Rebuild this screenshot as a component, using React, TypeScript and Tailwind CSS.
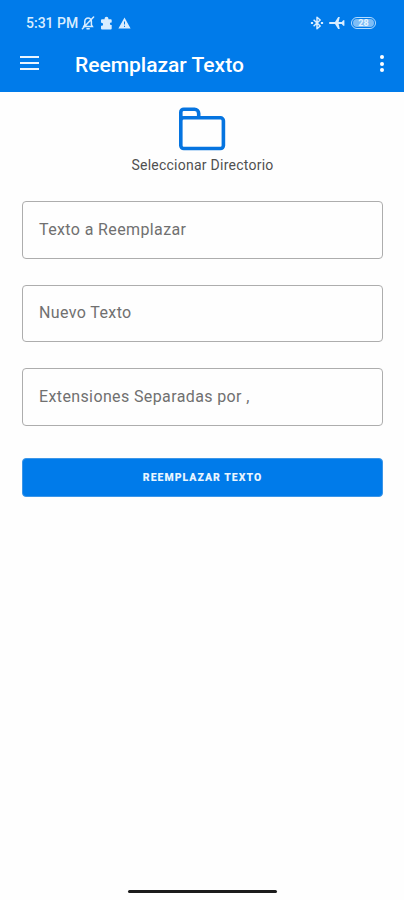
const fields = [
  { name: "buscar", label: "Texto a Reemplazar" },
  { name: "nuevo", label: "Nuevo Texto" },
  { name: "extensiones", label: "Extensiones Separadas por ," },
];

function MutedBellIcon() {
  return (
    <svg viewBox="0 0 14 14" className="w-3.5 h-3.5" fill="none" stroke="currentColor" strokeWidth="1.5" strokeLinecap="round">
      <path d="M2.6 10.6h8.8L10.4 8.8V5.4A3.3 3.3 0 0 0 7.1 2.1a3.3 3.3 0 0 0-3.3 3.3v3.2L2.6 10.6M6 12.7h2.2M12.6 1 1.4 12.8" />
    </svg>
  );
}

function PuzzleIcon() {
  return (
    <svg viewBox="0 0 13 14" className="w-[13px] h-3.5" fill="currentColor">
      <path d="M4.6 3.2V2.6a1.9 1.9 0 0 1 3.8 0v.6h2.3a1 1 0 0 1 1 1v2.2h-.5a1.3 1.3 0 0 0 0 2.6h.5v3.6a1 1 0 0 1-1 1H2a1 1 0 0 1-1-1V9.7h.6a1.5 1.5 0 0 0 0-3H1V4.2a1 1 0 0 1 1-1Z" />
    </svg>
  );
}

function WarningIcon() {
  return (
    <svg viewBox="0 0 13 12" className="w-[13px] h-3" fill="currentColor">
      <path fillRule="evenodd" d="M6.5.4 12.6 11.5H.4ZM6 4.4v3.2h1V4.4ZM6 8.7v1.2h1V8.7Z" />
    </svg>
  );
}

function BluetoothIcon() {
  return (
    <svg viewBox="0 0 14 14" className="w-3.5 h-3.5" fill="none" stroke="currentColor" strokeWidth="1.5" strokeLinejoin="round">
      <path d="M3.6 3.8 10.2 10 7 12.8V1.2L10.2 4 3.6 10.2" />
      <path d="M.9 7h2.2M10.9 7h2.2" strokeWidth="1.9" />
    </svg>
  );
}

function PlaneIcon() {
  return (
    <svg viewBox="0 0 16 14" className="w-4 h-3.5" fill="currentColor">
      <path d="M.9 6.1H6L9.2 1h1.6L9.6 6.1h3.2l1.4-1.9h1.2v5.6h-1.2l-1.4-1.9H9.6l1.2 5.1H9.2L6 7.9H.9a.9.9 0 0 1 0-1.8Z" />
    </svg>
  );
}

function FolderIcon() {
  return (
    <svg viewBox="0 0 48 44" className="w-12 h-11" fill="none" stroke="#0574e0" strokeWidth="3.6" strokeLinejoin="round">
      <path d="M2.8 15V5.2a3 3 0 0 1 3-3h10.7a4.2 4.2 0 0 1 4.2 4.2v4.4h21.7a3 3 0 0 1 3 3v24.7a3 3 0 0 1-3 3H5.8a3 3 0 0 1-3-3V13.8a3 3 0 0 1 3-3h16.2" />
    </svg>
  );
}

function StatusBar() {
  return (
    <div className="h-[37px] pt-[9px] pl-[26px] pr-[28px] flex items-center justify-between text-[#d9edff]">
      <div className="flex items-center">
        <span className="w-[53px] text-[14px] leading-none font-medium whitespace-nowrap">5:31 PM</span>
        <span className="ml-[2px]"><MutedBellIcon /></span>
        <span className="ml-[5px]"><PuzzleIcon /></span>
        <span className="ml-[5px]"><WarningIcon /></span>
      </div>
      <div className="flex items-center">
        <BluetoothIcon />
        <span className="ml-[5px]"><PlaneIcon /></span>
        <div className="ml-1.5 w-[25px] h-[12px] p-px rounded-full border border-[#b5dcff]">
          <div className="h-full rounded-full bg-[#7dbdf6] flex items-center justify-center text-[9px] leading-none font-bold text-[#e5f4ff]">
            28
          </div>
        </div>
      </div>
    </div>
  );
}

function TopBar() {
  return (
    <div className="h-[55px] pl-5 pr-[20px] flex items-center">
      <button className="mb-[3px] w-[19px] h-[14px] flex flex-col justify-between" aria-label="Menú">
        <span className="w-full h-0.5 bg-[#e9f5ff]" />
        <span className="w-full h-0.5 bg-[#e9f5ff]" />
        <span className="w-full h-0.5 bg-[#e9f5ff]" />
      </button>
      <h1 className="ml-9 text-[21px] leading-6 font-medium text-white">Reemplazar Texto</h1>
      <button className="ml-auto mb-[2px] w-1 h-[17px] flex flex-col justify-between" aria-label="Más opciones">
        <span className="w-1 h-1 rounded-full bg-white" />
        <span className="w-1 h-1 rounded-full bg-white" />
        <span className="w-1 h-1 rounded-full bg-white" />
      </button>
    </div>
  );
}

export default function App() {
  return (
    <div className="h-[900px] w-[404px] bg-[#fefefe] flex flex-col font-['Roboto',sans-serif]">
      <header className="bg-[#007bea]">
        <StatusBar />
        <TopBar />
      </header>

      <main className="flex-1 pl-[22px] pr-[21px] pt-[15px]">
        <button className="mx-auto flex flex-col items-center">
          <FolderIcon />
          <span className="mt-1 text-[14px] leading-5 tracking-[0.25px] text-[#505050] whitespace-nowrap">
            Seleccionar Directorio
          </span>
        </button>

        <div className="mt-[26px] flex flex-col gap-[26px]">
          {fields.map((field) => (
            <div key={field.name} className="h-[57.5px] px-4 flex items-center rounded-[4px] border border-[#adadad]">
              <label className="text-[16px] leading-6 tracking-[0.38px] text-[#707070]">{field.label}</label>
            </div>
          ))}
        </div>

        <button className="mt-8 w-full h-[39px] pt-[2px] rounded-[4px] bg-[#007bea] border border-[#3c96e8] text-[10.5px] leading-none font-black tracking-[1px] text-[#e9f5ff]">
          REEMPLAZAR TEXTO
        </button>
      </main>

      {/* Gesture bar */}
      <div className="pb-[7px] flex justify-center">
        <div className="w-[149px] h-[3px] rounded-full bg-[#1c1c1c]" />
      </div>
    </div>
  );
}
